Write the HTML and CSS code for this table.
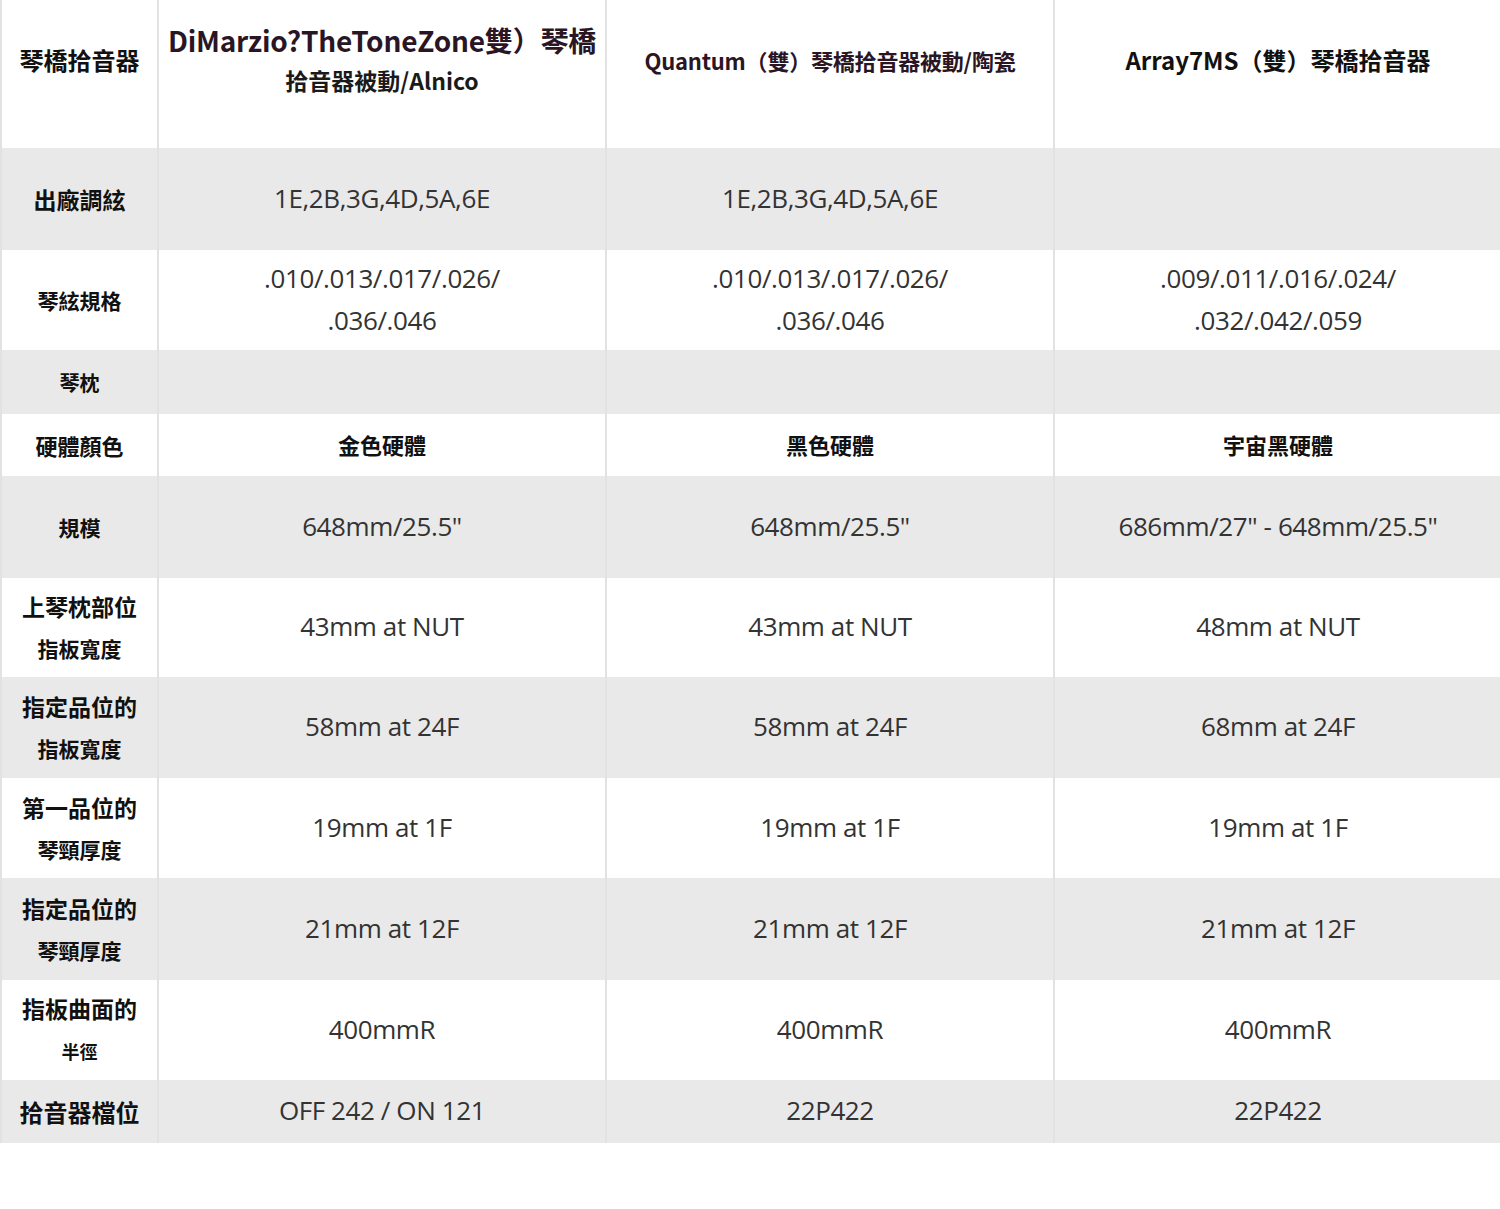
FILE: index.html
```html
<!DOCTYPE html>
<html lang="zh-Hant">
<head>
<meta charset="utf-8">
<link rel="stylesheet" href="styles.css">
</head>
<body>
<table class="spec">
  <colgroup>
    <col class="c-label"><col class="c-val"><col class="c-val"><col class="c-val">
  </colgroup>
  <tr class="row-head">
    <th class="lbl l24">琴橋拾音器</th>
    <th class="hd"><span class="hd-a">DiMarzio?TheToneZone雙）琴橋</span><br><span class="hd-b">拾音器被動/Alnico</span></th>
    <th class="hd"><span class="hd-q">Quantum（雙）琴橋拾音器被動/陶瓷</span></th>
    <th class="hd"><span class="hd-r">Array7MS（雙）琴橋拾音器</span></th>
  </tr>
  <tr class="gray h102">
    <th class="lbl l23">出廠調絃</th>
    <td>1E,2B,3G,4D,5A,6E</td>
    <td>1E,2B,3G,4D,5A,6E</td>
    <td></td>
  </tr>
  <tr class="h100">
    <th class="lbl l21">琴絃規格</th>
    <td class="two">.010/.013/.017/.026/<br>.036/.046</td>
    <td class="two">.010/.013/.017/.026/<br>.036/.046</td>
    <td class="two">.009/.011/.016/.024/<br>.032/.042/.059</td>
  </tr>
  <tr class="gray h64">
    <th class="lbl l20">琴枕</th>
    <td></td><td></td><td></td>
  </tr>
  <tr class="h62">
    <th class="lbl l22">硬體顏色</th>
    <td class="cjk">金色硬體</td>
    <td class="cjk">黑色硬體</td>
    <td class="cjk">宇宙黑硬體</td>
  </tr>
  <tr class="gray h102">
    <th class="lbl l21">規模</th>
    <td>648mm/25.5"</td>
    <td>648mm/25.5"</td>
    <td>686mm/27" - 648mm/25.5"</td>
  </tr>
  <tr class="h99">
    <th class="lbl l23 two-l">上琴枕部位<br><span class="sub">指板寬度</span></th>
    <td>43mm at NUT</td>
    <td>43mm at NUT</td>
    <td>48mm at NUT</td>
  </tr>
  <tr class="gray h101">
    <th class="lbl l23 two-l">指定品位的<br><span class="sub">指板寬度</span></th>
    <td>58mm at 24F</td>
    <td>58mm at 24F</td>
    <td>68mm at 24F</td>
  </tr>
  <tr class="h100">
    <th class="lbl l23 two-l">第一品位的<br><span class="sub">琴頸厚度</span></th>
    <td>19mm at 1F</td>
    <td>19mm at 1F</td>
    <td>19mm at 1F</td>
  </tr>
  <tr class="gray h102">
    <th class="lbl l23 two-l">指定品位的<br><span class="sub">琴頸厚度</span></th>
    <td>21mm at 12F</td>
    <td>21mm at 12F</td>
    <td>21mm at 12F</td>
  </tr>
  <tr class="h100">
    <th class="lbl l23 two-l">指板曲面的<br><span class="sub small">半徑</span></th>
    <td>400mmR</td>
    <td>400mmR</td>
    <td>400mmR</td>
  </tr>
  <tr class="gray h63">
    <th class="lbl l24">拾音器檔位</th>
    <td>OFF 242 / ON 121</td>
    <td>22P422</td>
    <td>22P422</td>
  </tr>
</table>
</body>
</html>
```

FILE: styles.css
```css
html, body {
  margin: 0;
  padding: 0;
  background: #ffffff;
}

.spec {
  width: 1500px;
  border-collapse: collapse;
  table-layout: fixed;
  font-family: "Open Sans", "Noto Sans", "Noto Sans CJK TC", sans-serif;
}

.c-label { width: 157px; }
.c-val { width: 448px; }

.spec th,
.spec td {
  padding: 0;
  text-align: center;
  vertical-align: middle;
  border-left: 2px solid #e2e2e2;
  border-right: 2px solid #e2e2e2;
}

.spec td {
  font-size: 26px;
  color: #333333;
  font-weight: 400;
  letter-spacing: -0.4px;
  padding-bottom: 3px;
}

.spec td.two {
  line-height: 42px;
}

.spec td.cjk {
  font-family: "Noto Sans CJK TC", sans-serif;
  font-weight: 700;
  font-size: 22px;
  color: #111;
  letter-spacing: 0;
}

.gray th,
.gray td {
  background: #e9e9e9;
}

.row-head { height: 148px; }
.row-head th { padding-bottom: 29px; }
.h102 { height: 102px; }
.h101 { height: 101px; }
.h100 { height: 100px; }
.h99 { height: 99px; }
.h64 { height: 64px; }
.h63 { height: 63px; }
.h62 { height: 62px; }

.lbl {
  font-family: "Noto Sans CJK TC", sans-serif;
  font-weight: 700;
  color: #111;
}

.l20 { font-size: 20px; }
.l21 { font-size: 21px; }
.l22 { font-size: 22px; }
.l23 { font-size: 23px; }
.l24 { font-size: 24px; }

.two-l { line-height: 41px; }
.sub { font-size: 21px; }
.sub.small { font-size: 18px; }

.hd {
  font-family: "Noto Sans CJK TC", sans-serif;
  font-weight: 700;
  color: #2a1525;
}

.hd-a {
  font-size: 28px;
  line-height: 40px;
  letter-spacing: -0.2px;
  white-space: nowrap;
}

.hd-b {
  font-size: 23px;
  line-height: 40px;
  color: #1a1a1a;
}

.hd-q {
  font-size: 22px;
  letter-spacing: -0.2px;
}

.hd-r {
  font-size: 24px;
  color: #111;
}
```
